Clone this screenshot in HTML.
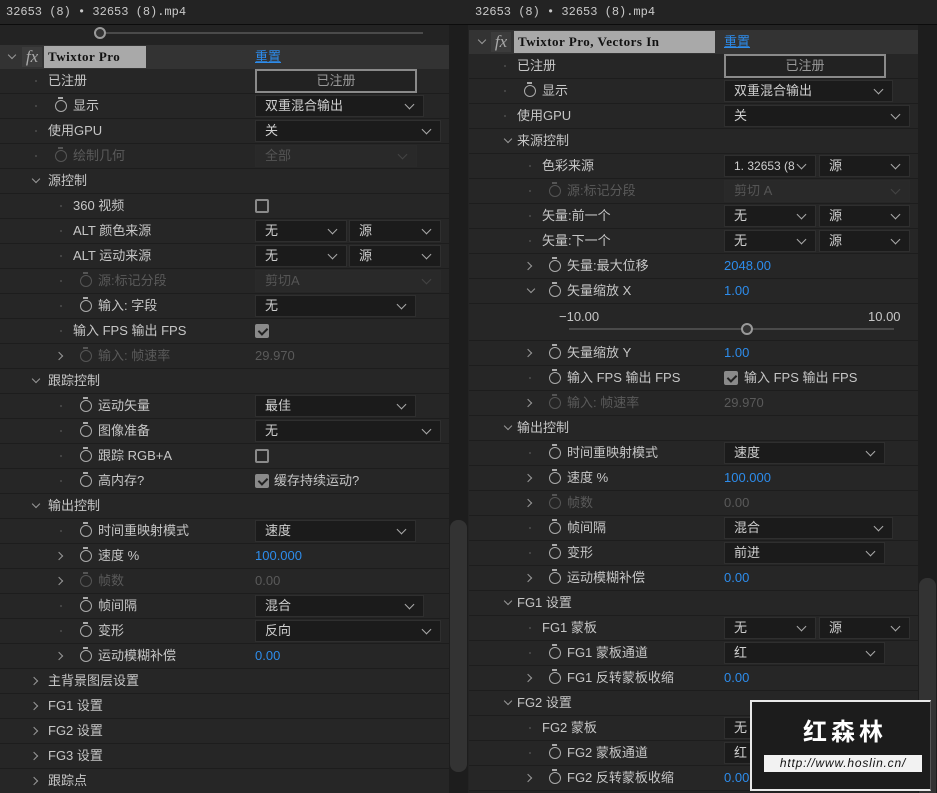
<!DOCTYPE html>
<html><head><meta charset="utf-8"><style>
*{margin:0;padding:0;box-sizing:border-box}
body{width:937px;height:793px;background:#232323;position:relative;overflow:hidden;font-family:"Liberation Sans","Noto Sans CJK SC",sans-serif;font-size:13px;color:#c6c6c6}
.p{position:absolute;top:0;height:793px;overflow:hidden;background:#232323}
.r{position:absolute;left:0;height:25px;border-bottom:1px solid #1d1d1d;background:#262626}
.r>*{position:absolute}
.l{top:4px;line-height:16px;white-space:nowrap}
.m{font-family:"Liberation Mono","Noto Sans CJK SC",monospace;font-size:12px}
.d{color:#5a5a5a}
.dot{top:11px;width:2px;height:2px;background:#444}
.sw{top:6px;width:12px;height:12px;border:1.6px solid #aaa;border-radius:50%}
.sw:before{content:"";position:absolute;left:2px;top:-4px;width:5px;height:2px;background:#aaa}
.d.sw{border-color:#555}.d.sw:before{background:#555}
.cd{top:7px;width:6px;height:6px;border-right:1px solid #999;border-bottom:1px solid #999;transform:rotate(45deg)}
.cr{top:9px;width:6px;height:6px;border-right:1px solid #999;border-bottom:1px solid #999;transform:rotate(-45deg)}
.dd{top:1px;height:22px;background:#1b1b1b;border:1px solid #2f2f2f;padding-left:9px;line-height:20px;color:#cfcfcf}
.dd:after{content:"";position:absolute;right:10px;top:5px;width:6px;height:6px;border-right:1px solid #aaa;border-bottom:1px solid #aaa;transform:rotate(45deg)}
.dd.x{background:#292929;border-color:#2a2a2a;color:#555}.dd.x:after{border-color:#444}
.v{top:4px;line-height:16px;color:#2d8ceb}
.cb{top:5px;width:14px;height:14px;border:2px solid #8a8a8a;border-radius:2px}
.cb.c{background:#8a8a8a}
.cb.c:after{content:"";position:absolute;left:3px;top:0px;width:4px;height:7px;border-right:2px solid #222;border-bottom:2px solid #222;transform:rotate(45deg)}
.btn{top:0;height:24px;border:2px solid #8a8a8a;background:#222;text-align:center;line-height:20px;color:#999}
.fx{position:absolute;left:0;height:24px;background:#333}
.tb{position:absolute;top:1px;height:22px;background:#a9a9a9;color:#111;font-family:"Liberation Serif",serif;font-weight:bold;font-size:13px;line-height:22px;padding-left:4px;letter-spacing:.5px}
.fxi{position:absolute;top:2px;width:20px;height:20px;background:#3c3c3c;color:#aaa;font-style:italic;font-family:"Liberation Serif",serif;font-size:17px;line-height:19px;text-align:center}
.rs{position:absolute;top:3px;color:#2d8ceb;text-decoration:underline;line-height:18px}
.title{position:absolute;left:0;top:0;height:25px;border-bottom:1px solid #0c0c0c;background:#232323;width:100%;font-family:"Liberation Mono",monospace;font-size:12px;line-height:25px;padding-left:6px;color:#c8c8c8}
.sb{position:absolute;top:25px;width:19px;height:768px;background:#1d1d1d}
.th{position:absolute;left:1px;width:17px;background:#333;border-radius:8px}
</style></head><body>

<!-- LEFT PANEL -->
<div class="p" style="left:0;width:469px">
<div class="title">32653 (8) • 32653 (8).mp4</div>
<div style="position:absolute;left:0;top:25px;width:449px;height:20px;background:#232323"></div>
<div style="position:absolute;left:100px;top:32px;width:323px;height:2px;background:#4a4a4a"></div>
<div style="position:absolute;left:94px;top:27px;width:12px;height:12px;border:2px solid #999;border-radius:50%;background:#333"></div>
<div style="position:absolute;left:0;top:45px;width:449px;height:748px">
<div class="fx" style="top:0;width:449px"><span class="cd" style="position:absolute;left:9px;top:7px;width:6px;height:6px;border-right:1px solid #999;border-bottom:1px solid #999;transform:rotate(45deg)"></span><span class="fxi" style="left:22px">fx</span><span class="tb" style="left:44px;width:102px">Twixtor Pro</span><span class="rs" style="left:255px">重置</span></div>
</div>
<div style="position:absolute;left:0;top:0;width:449px">
<div class="r" style="top:69px;width:449px"><i class="dot" style="left:35px"></i><span class="l" style="left:48px">已注册</span><span class="btn" style="left:255px;width:162px">已注册</span></div>
<div class="r" style="top:94px;width:449px"><i class="dot" style="left:35px"></i><i class="sw" style="left:55px"></i><span class="l" style="left:73px">显示</span><span class="dd" style="left:255px;width:169px">双重混合输出</span></div>
<div class="r" style="top:119px;width:449px"><i class="dot" style="left:35px"></i><span class="l" style="left:48px">使用GPU</span><span class="dd" style="left:255px;width:186px">关</span></div>
<div class="r" style="top:144px;width:449px"><i class="dot" style="left:35px"></i><i class="sw d" style="left:55px"></i><span class="l d" style="left:73px">绘制几何</span><span class="dd x" style="left:255px;width:162px">全部</span></div>
<div class="r" style="top:169px;width:449px"><i class="cd" style="left:33px"></i><span class="l" style="left:48px">源控制</span></div>
<div class="r" style="top:194px;width:449px"><i class="dot" style="left:60px"></i><span class="l" style="left:73px">360 视频</span><i class="cb" style="left:255px"></i></div>
<div class="r" style="top:219px;width:449px"><i class="dot" style="left:60px"></i><span class="l" style="left:73px">ALT 颜色来源</span><span class="dd" style="left:255px;width:92px">无</span><span class="dd" style="left:349px;width:92px">源</span></div>
<div class="r" style="top:244px;width:449px"><i class="dot" style="left:60px"></i><span class="l" style="left:73px">ALT 运动来源</span><span class="dd" style="left:255px;width:92px">无</span><span class="dd" style="left:349px;width:92px">源</span></div>
<div class="r" style="top:269px;width:449px"><i class="dot" style="left:60px"></i><i class="sw d" style="left:80px"></i><span class="l d" style="left:98px">源:标记分段</span><span class="dd x" style="left:255px;width:186px">剪切A</span></div>
<div class="r" style="top:294px;width:449px"><i class="dot" style="left:60px"></i><i class="sw" style="left:80px"></i><span class="l" style="left:98px">输入: 字段</span><span class="dd" style="left:255px;width:161px">无</span></div>
<div class="r" style="top:319px;width:449px"><i class="dot" style="left:60px"></i><span class="l" style="left:73px">输入 FPS 输出 FPS</span><i class="cb c" style="left:255px"></i></div>
<div class="r" style="top:344px;width:449px"><i class="cr" style="left:56px"></i><i class="sw d" style="left:80px"></i><span class="l d" style="left:98px">输入: 帧速率</span><span class="l d" style="left:255px">29.970</span></div>
<div class="r" style="top:369px;width:449px"><i class="cd" style="left:33px"></i><span class="l" style="left:48px">跟踪控制</span></div>
<div class="r" style="top:394px;width:449px"><i class="dot" style="left:60px"></i><i class="sw" style="left:80px"></i><span class="l" style="left:98px">运动矢量</span><span class="dd" style="left:255px;width:161px">最佳</span></div>
<div class="r" style="top:419px;width:449px"><i class="dot" style="left:60px"></i><i class="sw" style="left:80px"></i><span class="l" style="left:98px">图像准备</span><span class="dd" style="left:255px;width:186px">无</span></div>
<div class="r" style="top:444px;width:449px"><i class="dot" style="left:60px"></i><i class="sw" style="left:80px"></i><span class="l" style="left:98px">跟踪 RGB+A</span><i class="cb" style="left:255px"></i></div>
<div class="r" style="top:469px;width:449px"><i class="dot" style="left:60px"></i><i class="sw" style="left:80px"></i><span class="l" style="left:98px">高内存?</span><i class="cb c" style="left:255px"></i><span class="l" style="left:274px">缓存持续运动?</span></div>
<div class="r" style="top:494px;width:449px"><i class="cd" style="left:33px"></i><span class="l" style="left:48px">输出控制</span></div>
<div class="r" style="top:519px;width:449px"><i class="dot" style="left:60px"></i><i class="sw" style="left:80px"></i><span class="l" style="left:98px">时间重映射模式</span><span class="dd" style="left:255px;width:161px">速度</span></div>
<div class="r" style="top:544px;width:449px"><i class="cr" style="left:56px"></i><i class="sw" style="left:80px"></i><span class="l" style="left:98px">速度 %</span><span class="v" style="left:255px">100.000</span></div>
<div class="r" style="top:569px;width:449px"><i class="cr" style="left:56px"></i><i class="sw d" style="left:80px"></i><span class="l d" style="left:98px">帧数</span><span class="l d" style="left:255px">0.00</span></div>
<div class="r" style="top:594px;width:449px"><i class="dot" style="left:60px"></i><i class="sw" style="left:80px"></i><span class="l" style="left:98px">帧间隔</span><span class="dd" style="left:255px;width:169px">混合</span></div>
<div class="r" style="top:619px;width:449px"><i class="dot" style="left:60px"></i><i class="sw" style="left:80px"></i><span class="l" style="left:98px">变形</span><span class="dd" style="left:255px;width:186px">反向</span></div>
<div class="r" style="top:644px;width:449px"><i class="cr" style="left:56px"></i><i class="sw" style="left:80px"></i><span class="l" style="left:98px">运动模糊补偿</span><span class="v" style="left:255px">0.00</span></div>
<div class="r" style="top:669px;width:449px"><i class="cr" style="left:31px"></i><span class="l" style="left:48px">主背景图层设置</span></div>
<div class="r" style="top:694px;width:449px"><i class="cr" style="left:31px"></i><span class="l" style="left:48px">FG1 设置</span></div>
<div class="r" style="top:719px;width:449px"><i class="cr" style="left:31px"></i><span class="l" style="left:48px">FG2 设置</span></div>
<div class="r" style="top:744px;width:449px"><i class="cr" style="left:31px"></i><span class="l" style="left:48px">FG3 设置</span></div>
<div class="r" style="top:769px;width:449px"><i class="cr" style="left:31px"></i><span class="l" style="left:48px">跟踪点</span></div>
</div>
<div class="sb" style="left:449px"><div class="th" style="top:495px;height:252px"></div></div>
</div>

<!-- RIGHT PANEL -->
<div class="p" style="left:469px;width:468px">
<div class="title">32653 (8) • 32653 (8).mp4</div>
<div class="fx" style="top:30px;width:449px"><span style="position:absolute;left:10px;top:7px;width:6px;height:6px;border-right:1px solid #999;border-bottom:1px solid #999;transform:rotate(45deg)"></span><span class="fxi" style="left:22px">fx</span><span class="tb" style="left:45px;width:201px">Twixtor Pro, Vectors In</span><span class="rs" style="left:255px">重置</span></div>
<div style="position:absolute;left:0;top:0;width:449px">
<div class="r" style="top:54px;width:449px"><i class="dot" style="left:35px"></i><span class="l" style="left:48px">已注册</span><span class="btn" style="left:255px;width:162px">已注册</span></div>
<div class="r" style="top:79px;width:449px"><i class="dot" style="left:35px"></i><i class="sw" style="left:55px"></i><span class="l" style="left:73px">显示</span><span class="dd" style="left:255px;width:169px">双重混合输出</span></div>
<div class="r" style="top:104px;width:449px"><i class="dot" style="left:35px"></i><span class="l" style="left:48px">使用GPU</span><span class="dd" style="left:255px;width:186px">关</span></div>
<div class="r" style="top:129px;width:449px"><i class="cd" style="left:36px"></i><span class="l" style="left:48px">来源控制</span></div>
<div class="r" style="top:154px;width:449px"><i class="dot" style="left:60px"></i><span class="l" style="left:73px">色彩来源</span><span class="dd" style="left:255px;width:92px;font-size:12px">1. 32653 (8</span><span class="dd" style="left:350px;width:91px">源</span></div>
<div class="r" style="top:179px;width:449px"><i class="dot" style="left:60px"></i><i class="sw d" style="left:80px"></i><span class="l d" style="left:98px">源:标记分段</span><span class="dd x" style="left:255px;width:186px">剪切 A</span></div>
<div class="r" style="top:204px;width:449px"><i class="dot" style="left:60px"></i><span class="l" style="left:73px">矢量:前一个</span><span class="dd" style="left:255px;width:92px">无</span><span class="dd" style="left:350px;width:91px">源</span></div>
<div class="r" style="top:229px;width:449px"><i class="dot" style="left:60px"></i><span class="l" style="left:73px">矢量:下一个</span><span class="dd" style="left:255px;width:92px">无</span><span class="dd" style="left:350px;width:91px">源</span></div>
<div class="r" style="top:254px;width:449px"><i class="cr" style="left:56px"></i><i class="sw" style="left:80px"></i><span class="l" style="left:98px">矢量:最大位移</span><span class="v" style="left:255px">2048.00</span></div>
<div class="r" style="top:279px;width:449px"><i class="cd" style="left:59px"></i><i class="sw" style="left:80px"></i><span class="l" style="left:98px">矢量缩放 X</span><span class="v" style="left:255px">1.00</span></div>
<div class="r" style="top:304px;width:449px;height:37px"><span class="l" style="left:90px;top:5px">−10.00</span><span class="l" style="left:399px;top:5px">10.00</span><i style="left:100px;top:24px;width:325px;height:2px;background:#4a4a4a"></i><i style="left:272px;top:19px;width:12px;height:12px;border:2px solid #999;border-radius:50%;background:#333"></i></div>
<div class="r" style="top:341px;width:449px"><i class="cr" style="left:56px"></i><i class="sw" style="left:80px"></i><span class="l" style="left:98px">矢量缩放 Y</span><span class="v" style="left:255px">1.00</span></div>
<div class="r" style="top:366px;width:449px"><i class="dot" style="left:60px"></i><i class="sw" style="left:80px"></i><span class="l" style="left:98px">输入 FPS 输出 FPS</span><i class="cb c" style="left:255px"></i><span class="l" style="left:275px">输入 FPS 输出 FPS</span></div>
<div class="r" style="top:391px;width:449px"><i class="cr" style="left:56px"></i><i class="sw d" style="left:80px"></i><span class="l d" style="left:98px">输入: 帧速率</span><span class="l d" style="left:255px">29.970</span></div>
<div class="r" style="top:416px;width:449px"><i class="cd" style="left:36px"></i><span class="l" style="left:48px">输出控制</span></div>
<div class="r" style="top:441px;width:449px"><i class="dot" style="left:60px"></i><i class="sw" style="left:80px"></i><span class="l" style="left:98px">时间重映射模式</span><span class="dd" style="left:255px;width:161px">速度</span></div>
<div class="r" style="top:466px;width:449px"><i class="cr" style="left:56px"></i><i class="sw" style="left:80px"></i><span class="l" style="left:98px">速度 %</span><span class="v" style="left:255px">100.000</span></div>
<div class="r" style="top:491px;width:449px"><i class="cr" style="left:56px"></i><i class="sw d" style="left:80px"></i><span class="l d" style="left:98px">帧数</span><span class="l d" style="left:255px">0.00</span></div>
<div class="r" style="top:516px;width:449px"><i class="dot" style="left:60px"></i><i class="sw" style="left:80px"></i><span class="l" style="left:98px">帧间隔</span><span class="dd" style="left:255px;width:169px">混合</span></div>
<div class="r" style="top:541px;width:449px"><i class="dot" style="left:60px"></i><i class="sw" style="left:80px"></i><span class="l" style="left:98px">变形</span><span class="dd" style="left:255px;width:161px">前进</span></div>
<div class="r" style="top:566px;width:449px"><i class="cr" style="left:56px"></i><i class="sw" style="left:80px"></i><span class="l" style="left:98px">运动模糊补偿</span><span class="v" style="left:255px">0.00</span></div>
<div class="r" style="top:591px;width:449px"><i class="cd" style="left:36px"></i><span class="l" style="left:48px">FG1 设置</span></div>
<div class="r" style="top:616px;width:449px"><i class="dot" style="left:60px"></i><span class="l" style="left:73px">FG1 蒙板</span><span class="dd" style="left:255px;width:92px">无</span><span class="dd" style="left:350px;width:91px">源</span></div>
<div class="r" style="top:641px;width:449px"><i class="dot" style="left:60px"></i><i class="sw" style="left:80px"></i><span class="l" style="left:98px">FG1 蒙板通道</span><span class="dd" style="left:255px;width:161px">红</span></div>
<div class="r" style="top:666px;width:449px"><i class="cr" style="left:56px"></i><i class="sw" style="left:80px"></i><span class="l" style="left:98px">FG1 反转蒙板收缩</span><span class="v" style="left:255px">0.00</span></div>
<div class="r" style="top:691px;width:449px"><i class="cd" style="left:36px"></i><span class="l" style="left:48px">FG2 设置</span></div>
<div class="r" style="top:716px;width:449px"><i class="dot" style="left:60px"></i><span class="l" style="left:73px">FG2 蒙板</span><span class="dd" style="left:255px;width:92px">无</span><span class="dd" style="left:350px;width:91px">源</span></div>
<div class="r" style="top:741px;width:449px"><i class="dot" style="left:60px"></i><i class="sw" style="left:80px"></i><span class="l" style="left:98px">FG2 蒙板通道</span><span class="dd" style="left:255px;width:161px">红</span></div>
<div class="r" style="top:766px;width:449px"><i class="cr" style="left:56px"></i><i class="sw" style="left:80px"></i><span class="l" style="left:98px">FG2 反转蒙板收缩</span><span class="v" style="left:255px">0.00</span></div>
</div>
<div class="sb" style="left:449px"><div class="th" style="top:553px;height:240px"></div></div>
</div>

<!-- watermark -->
<div style="position:absolute;left:750px;top:700px;width:181px;height:91px;background:#1c1c1c;border:2px solid #e8e8e8;border-right:1px solid #555"></div>
<div style="position:absolute;left:790px;top:715px;width:110px;text-align:center;color:#fff;font-family:'Noto Sans CJK SC',sans-serif;font-weight:bold;font-size:24px;line-height:30px;letter-spacing:4px">红森林</div>
<div style="position:absolute;left:764px;top:755px;width:158px;height:17px;background:#f2f2f2;color:#111;font-family:'Liberation Sans',sans-serif;font-style:italic;font-size:12px;line-height:17px;text-align:center;letter-spacing:.8px">http://www.hoslin.cn/</div>
</body></html>
